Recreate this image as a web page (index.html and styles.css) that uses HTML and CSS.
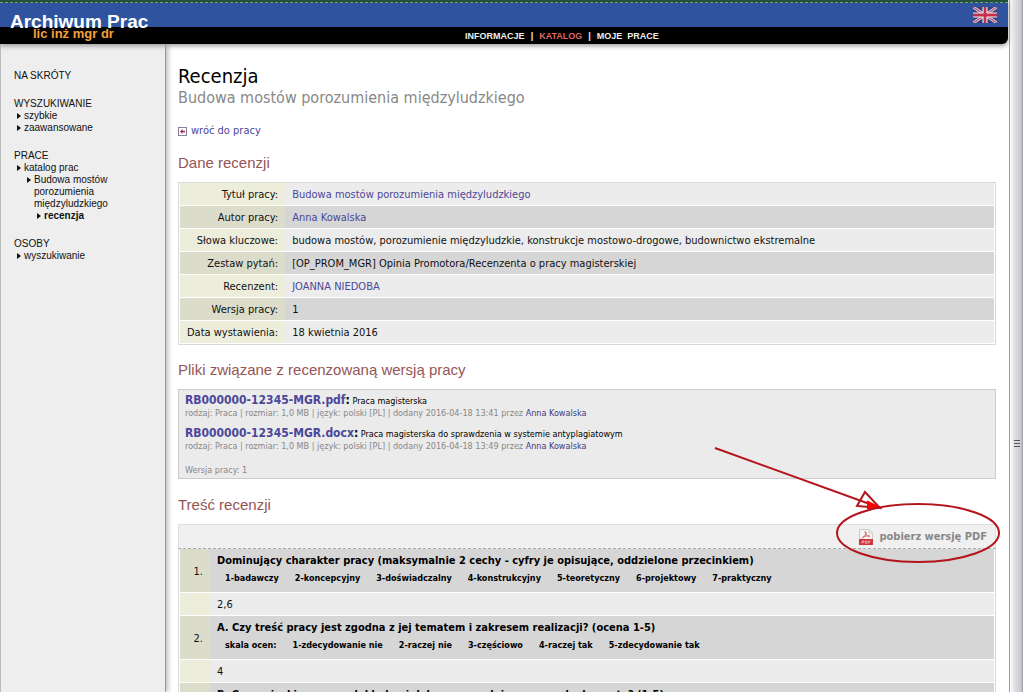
FILE: index.html
```html
<!DOCTYPE html>
<html lang="pl">
<head>
<meta charset="utf-8">
<title>Archiwum Prac - Recenzja</title>
<link rel="stylesheet" href="styles.css">
</head>
<body>
<div class="window">
  <div class="page">
    <header class="header">
      <div class="banner">
        <a class="flag" href="#" aria-label="English">
          <svg width="24" height="16" viewBox="0 0 24 16">
            <rect width="24" height="16" fill="#33407f"/>
            <path d="M0 0L24 16M24 0L0 16" stroke="#d8d6e8" stroke-width="3"/>
            <path d="M0 0L24 16M24 0L0 16" stroke="#c9546c" stroke-width="1.3"/>
            <path d="M12 0V16M0 8H24" stroke="#f4eef3" stroke-width="5"/>
            <path d="M12 0V16M0 8H24" stroke="#c62f4c" stroke-width="2.8"/>
          </svg>
        </a>
      </div>
      <nav class="topnav">
        <a href="#">INFORMACJE</a><span>|</span><a class="current" href="#">KATALOG</a><span>|</span><a href="#">MOJE&nbsp; PRACE</a>
      </nav>
      <div class="logo">
        <div class="logo-name">Archiwum Prac</div>
        <div class="logo-sub">lic inż mgr dr</div>
      </div>
    </header>
    <div class="columns">
      <aside class="sidebar">
        <h3>NA SKRÓTY</h3>
        <h3>WYSZUKIWANIE</h3>
        <ul>
          <li><a href="#">szybkie</a></li>
          <li><a href="#">zaawansowane</a></li>
        </ul>
        <h3>PRACE</h3>
        <ul>
          <li><a href="#">katalog prac</a>
            <ul>
              <li><a href="#">Budowa mostów porozumienia międzyludzkiego</a>
                <ul><li><a class="here" href="#">recenzja</a></li></ul>
              </li>
            </ul>
          </li>
        </ul>
        <h3>OSOBY</h3>
        <ul>
          <li><a href="#">wyszukiwanie</a></li>
        </ul>
      </aside>
      <main class="content">
        <h1>Recenzja</h1>
        <p class="subtitle">Budowa mostów porozumienia międzyludzkiego</p>
        <a class="back" href="#">
          <svg width="9" height="9" viewBox="0 0 9 9"><rect x=".5" y=".5" width="8" height="8" fill="#fff" stroke="#8a7f9f"/><path d="M2 4.500L4.500 2V3.700H7V5.300H4.500V7Z" fill="#a02850"/></svg>
          wróć do pracy</a>

        <h2>Dane recenzji</h2>
        <table class="details">
          <tr><th scope="row">Tytuł pracy:</th><td><a href="#">Budowa mostów porozumienia międzyludzkiego</a></td></tr>
          <tr><th scope="row">Autor pracy:</th><td><a href="#">Anna Kowalska</a></td></tr>
          <tr><th scope="row">Słowa kluczowe:</th><td>budowa mostów, porozumienie międzyludzkie, konstrukcje mostowo-drogowe, budownictwo ekstremalne</td></tr>
          <tr><th scope="row">Zestaw pytań:</th><td>[OP_PROM_MGR] Opinia Promotora/Recenzenta o pracy magisterskiej</td></tr>
          <tr><th scope="row">Recenzent:</th><td><a href="#">JOANNA NIEDOBA</a></td></tr>
          <tr><th scope="row">Wersja pracy:</th><td>1</td></tr>
          <tr><th scope="row">Data wystawienia:</th><td>18 kwietnia 2016</td></tr>
        </table>

        <h2>Pliki związane z recenzowaną wersją pracy</h2>
        <section class="files">
          <div class="file">
            <div class="file-title"><a href="#">RB000000-12345-MGR.pdf</a><b>:</b> Praca magisterska</div>
            <div class="meta">rodzaj: Praca | rozmiar: 1,0 MB | język: polski [PL] | dodany 2016-04-18 13:41 przez <a href="#">Anna Kowalska</a></div>
          </div>
          <div class="file">
            <div class="file-title"><a href="#">RB000000-12345-MGR.docx</a><b>:</b> Praca magisterska do sprawdzenia w systemie antyplagiatowym</div>
            <div class="meta">rodzaj: Praca | rozmiar: 1,0 MB | język: polski [PL] | dodany 2016-04-18 13:49 przez <a href="#">Anna Kowalska</a></div>
          </div>
          <div class="version">Wersja pracy: 1</div>
        </section>

        <h2>Treść recenzji</h2>
        <section class="review">
          <div class="toolbar">
            <a class="pdf" href="#">
              <svg width="14" height="16" viewBox="0 0 14 16">
                <path d="M.5.5H10L13.500 4V15.500H.5Z" fill="#f6f3f3" stroke="#cfcaca"/>
                <path d="M10 .5V4H13.500" fill="none" stroke="#cfcaca"/>
                <path d="M6.500 2C5.300 3 7 6 10.500 8.300M7 3C7 6 5 8 3 9.300M4 8C6 7 9 6.500 11 7" fill="none" stroke="#d0656a"/>
                <rect y="10" width="14" height="6" fill="#cf343b"/>
                <path d="M3 14.500V12H5V13.300H3M6.500 12V14.500H8V12ZM9.500 14.500V12H11.500M9.500 13.300H11" fill="none" stroke="#f0b4b6" stroke-width=".8"/>
              </svg>
              pobierz wersję PDF</a>
          </div>
          <table class="questions">
            <tr class="q"><th scope="row">1.</th><td>
              <div class="question">Dominujący charakter pracy (maksymalnie 2 cechy - cyfry je opisujące, oddzielone przecinkiem)</div>
              <div class="scale"><span>1-badawczy</span><span>2-koncepcyjny</span><span>3-doświadczalny</span><span>4-konstrukcyjny</span><span>5-teoretyczny</span><span>6-projektowy</span><span>7-praktyczny</span></div></td></tr>
            <tr><th></th><td>2,6</td></tr>
            <tr class="q"><th scope="row">2.</th><td>
              <div class="question">A. Czy treść pracy jest zgodna z jej tematem i zakresem realizacji? (ocena 1-5)</div>
              <div class="scale"><span>skala ocen:</span><span>1-zdecydowanie nie</span><span>2-raczej nie</span><span>3-częściowo</span><span>4-raczej tak</span><span>5-zdecydowanie tak</span></div></td></tr>
            <tr><th></th><td>4</td></tr>
            <tr class="q"><th scope="row">3.</th><td>
              <div class="question">B. Czy wnioski pracy są dokładne i dobrze uzasadnione przez dyplomanta? (1-5)</div>
              <div class="scale"><span>skala ocen:</span></div></td></tr>
          </table>
          <svg class="callout" width="290" height="120" viewBox="0 0 290 120" fill="none" stroke="#b5141c" stroke-width="2">
            <path d="M3 3L166 62"/>
            <path d="M153 47L168 63L145 61Z"/>
            <path d="M156 57L168 63L156 63Z" fill="#f00" stroke="#f00"/>
            <ellipse cx="206" cy="88" rx="81" ry="29"/>
          </svg>
        </section>
      </main>
    </div>
  </div>
  <div class="splitter"><i></i><i></i><i></i></div>
</div>
</body>
</html>
```
FILE: styles.css
```css
* { box-sizing: border-box; }
body { margin: 0; font: 11px/16px "DejaVu Sans Condensed", "DejaVu Sans", sans-serif; color: #111; background: #fff; }
a { color: #4b4799; text-decoration: none; }
h1, h2, h3, p, ul { margin: 0; padding: 0; font-weight: normal; }
.window { display: flex; height: 100vh; overflow: hidden; }
.page { flex: 1; min-width: 0; display: flex; flex-direction: column; border-right: 1px solid #999; }
.splitter { width: 13px; display: flex; flex-direction: column; align-items: center; padding-top: 440px; gap: 2px; background: linear-gradient(90deg, #fff, #e3e3e6 30%, #c8c8ce 85%, #99a); }
.splitter i { width: 6px; height: 1px; background: #555; }

.header { position: relative; z-index: 1; margin-right: 1px; background: #000; border-radius: 0 0 6px 0; box-shadow: 0 2px 5px #999; }
.banner { height: 27px; padding: 4px 11px 0 0; display: flex; justify-content: flex-end; background: #2f539f; border-top: 3px solid #24503c; position: relative; }
.banner::before { content: ""; position: absolute; top: -1px; left: 0; right: 0; border-top: 1px dashed #71a080; }
.flag { height: 16px; }
.topnav { height: 17px; display: flex; justify-content: center; gap: 6px; padding-left: 116px; font: bold 9px/18px "Liberation Sans", sans-serif; color: #eee; }
.topnav a { color: #eee; }
.topnav .current { color: #dc6666; }
.logo { position: absolute; left: 10px; top: 12px; font-family: "Liberation Sans", sans-serif; font-weight: bold; color: #fff; }
.logo-name { font-size: 19px; line-height: 20px; }
.logo-sub { font-size: 13px; line-height: 14px; margin-top: -5px; padding-left: 23px; color: #f5a03c; }

.columns { flex: 1; display: flex; min-height: 0; }
.sidebar { width: 166px; flex: none; padding: 10px 30px 0 13px; background: #eee; border-left: 1px solid #bbb; border-right: 1px solid #999; box-shadow: 2px 0 5px #bbb; font: 10px/12px "Liberation Sans", sans-serif; color: #111; }
.sidebar h3 { font-size: 10px; line-height: 12px; margin-top: 16px; }
.sidebar a { color: #111; }
.sidebar .here { font-weight: bold; }
.sidebar ul { list-style: none; }
.sidebar li { position: relative; padding-left: 10px; }
.sidebar li::before { content: ""; position: absolute; left: 3px; top: 3px; border: 3px solid transparent; border-left: 4px solid #111; border-right: 0; }

.content { flex: 1; min-width: 0; padding: 20px 13px 0 12px; }
h1 { font-size: 20px; line-height: 24px; color: #000; }
.subtitle { font-size: 16px; line-height: 20px; color: #888; }
.back { display: flex; align-items: center; gap: 4px; margin-top: 15px; line-height: 16px; }
h2 { font: 15px/20px "Liberation Sans", sans-serif; color: #955555; }
.back + h2 { margin-top: 14px; }
table { width: 100%; border-collapse: separate; border-spacing: 0; border: 1px solid #d8d8d8; padding: 0 1px; }
th, td { padding: 4px 7px 2px; height: 23px; font-weight: normal; border-bottom: 1px solid #fff; background: #ececec; text-align: left; }
th { background: #eceedb; text-align: right; }
.details { margin-top: 9px; }
.details th { width: 105px; white-space: nowrap; }
.details tr:nth-child(even) td, .q td { background: #d6d6d6; }
.details tr:nth-child(even) th, .q th { background: #dcdccb; }
.details + h2 { margin-top: 15px; }

.files { margin-top: 9px; padding: 4px 6px 2px; background: #ebebeb; border: 1px solid #ccc; font-size: 9px; line-height: 12px; }
.files + h2 { margin-top: 16px; }
.file { margin-bottom: 8px; }
.file-title { height: 13px; color: #000; }
.file-title a, .file-title b { font-size: 12px; font-weight: bold; }
.meta, .version { color: #888; }
.version { margin-top: 12px; }
.meta a { color: #3d3a80; }

.review { position: relative; margin-top: 9px; }
.toolbar { display: flex; justify-content: flex-end; align-items: center; height: 25px; padding-right: 8px; background: #f0f0f0; border: 1px solid #ddd; border-bottom: 1px dashed #aaa; }
.pdf { display: flex; align-items: center; gap: 6px; font-weight: bold; color: #888; }
.questions { border-top: 0; }
.questions th { width: 30px; }
.q td { height: 44px; vertical-align: top; }
.question { font-weight: bold; color: #000; }
.scale { display: flex; gap: 16px; padding-left: 8px; margin-top: 2px; font-size: 9px; line-height: 14px; font-weight: bold; color: #000; }
.callout { position: absolute; right: -6px; top: -79px; pointer-events: none; }
```
